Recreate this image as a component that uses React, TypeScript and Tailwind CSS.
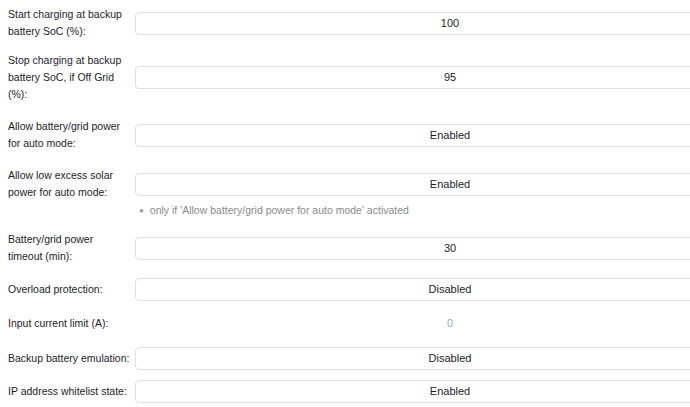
function Row({
  label,
  value,
  className,
  plain,
}: {
  label: string[];
  value: string;
  className: string;
  plain?: boolean;
}) {
  return (
    <div className={`flex items-center ${className}`}>
      <div className="w-[127px] shrink-0 text-[10.5px] leading-[17px] text-[#1d1d1f]">
        {label.map((l) => (
          <div key={l} className="whitespace-nowrap">
            {l}
          </div>
        ))}
      </div>
      {plain ? (
        <div className="w-[630px] shrink-0 h-[23px] flex items-center justify-center text-[11px] text-[#8ea6d6]">
          {value}
        </div>
      ) : (
        <div className="w-[630px] shrink-0 h-[23px] flex items-center justify-center rounded-[4px] border border-[#dfdfe6] bg-white text-[11px] text-[#1d1d1f]">
          {value}
        </div>
      )}
    </div>
  );
}

export default function App() {
  return (
    <div
      className="w-[690px] h-[407px] overflow-hidden bg-white"
      style={{ fontFamily: '"Liberation Sans", Arial, sans-serif' }}
    >
      <div className="w-[780px] pl-2 pt-[6px] flex flex-col">
        <Row label={['Start charging at backup', 'battery SoC (%):']} value="100" className="h-[34px]" />
        <Row
          label={['Stop charging at backup', 'battery SoC, if Off Grid', '(%):']}
          value="95"
          className="h-[51px] mt-[12px]"
        />
        <Row label={['Allow battery/grid power', 'for auto mode:']} value="Enabled" className="h-[34px] mt-[15px]" />
        <Row label={['Allow low excess solar', 'power for auto mode:']} value="Enabled" className="h-[34px] mt-[15px]" />
        <div className="flex items-center h-[17px] mt-[1px] pl-[131px] text-[10.5px] text-[#8a8a8e]">
          <span className="mr-[6px] text-[8px] text-[#a0a0a4]">●</span>
          <span>only if 'Allow battery/grid power for auto mode' activated</span>
        </div>
        <Row label={['Battery/grid power', 'timeout (min):']} value="30" className="h-[34px] mt-[12px]" />
        <Row label={['Overload protection:']} value="Disabled" className="h-[23px] mt-[13px]" />
        <Row label={['Input current limit (A):']} value="0" className="h-[23px] mt-[11px]" plain />
        <Row label={['Backup battery emulation:']} value="Disabled" className="h-[23px] mt-[12px]" />
        <Row label={['IP address whitelist state:']} value="Enabled" className="h-[23px] mt-[10px]" />
      </div>
    </div>
  );
}
